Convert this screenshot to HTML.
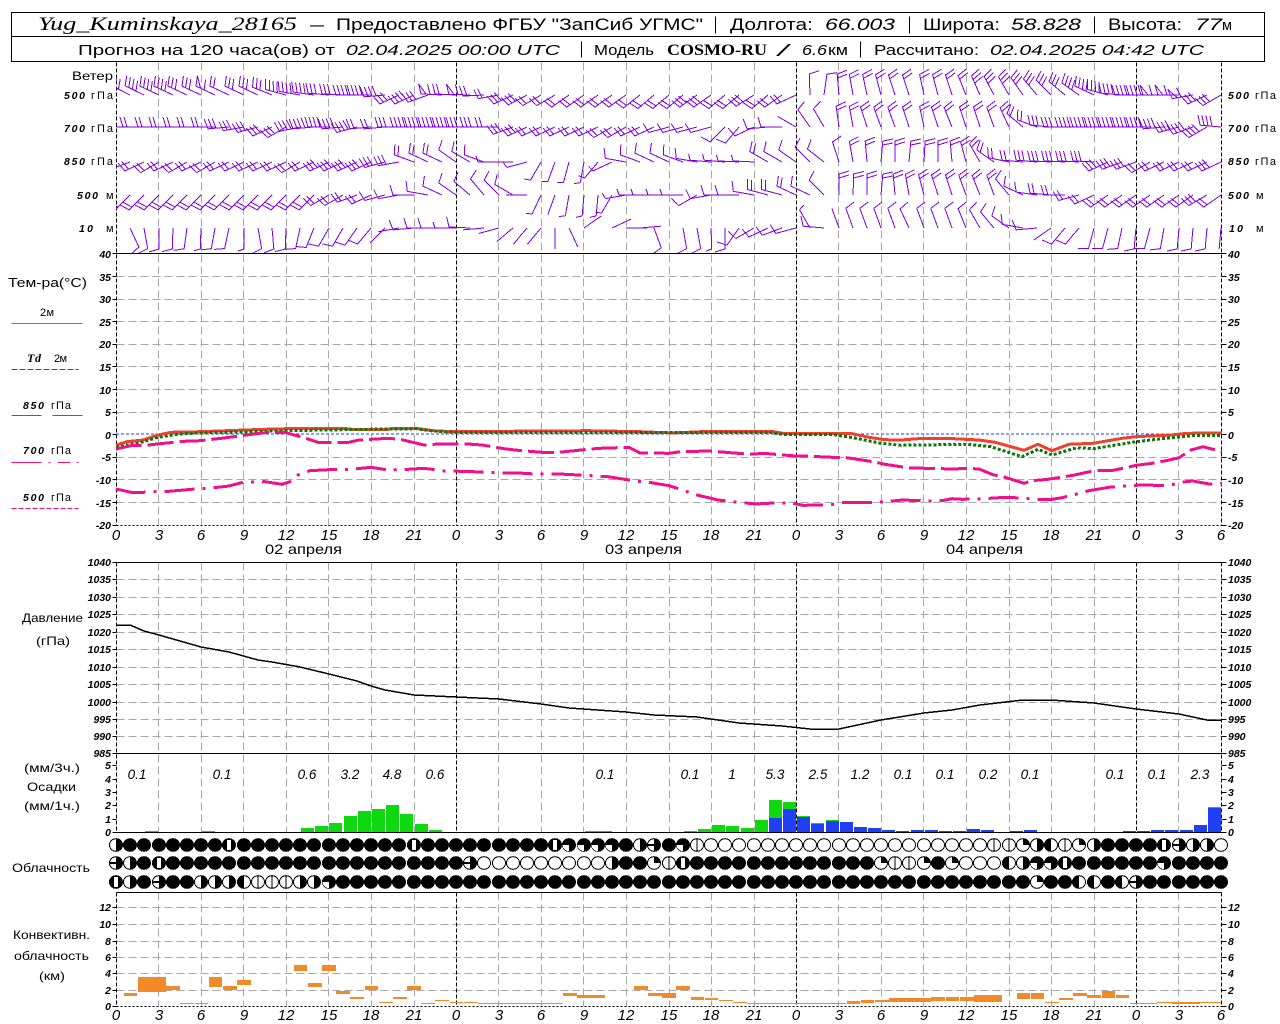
<!DOCTYPE html>
<html><head><meta charset="utf-8"><title>Meteogram</title>
<style>
html,body{margin:0;padding:0;background:#fff}
svg{display:block}
text{font-family:"Liberation Sans","DejaVu Sans",sans-serif;fill:#000;font-size:12px}
.i{font-style:italic}
.n{font-style:italic;font-size:10.5px;font-weight:bold}
.x{font-style:italic;font-size:15px}
.h1{font-size:16.5px}
.h2{font-size:15px}
.p{font-style:italic;font-size:13.5px}
</style></head><body>
<svg xmlns="http://www.w3.org/2000/svg" width="1280" height="1024" viewBox="0 0 1280 1024" shape-rendering="crispEdges">
<defs>
<clipPath id="wc"><rect x="116" y="62" width="1106" height="191"/></clipPath>
<g id="a"><path d="M0 0H-21"/></g>
<g id="s"><path d="M0 0H-21M-21 0l-2-6"/></g>
<g id="b"><path d="M0 0H-21l-3-10"/></g>
<g id="c"><path d="M0 0H-21l-3-10M-17 0l-3-10"/></g>
<g id="d"><path d="M0 0H-21l-3-10M-17 0l-3-10M-13 0l-3-10"/></g>
<g id="e"><path d="M0 0H-21l-3-10M-17 0l-3-10M-13 0l-3-10M-9 0l-3-10"/></g>
<g id="p"><path d="M0 0H-21l-3-10 8 10M-12 0l-3-10"/></g>
<path id="v" d="M0 62V525M0 562V832M0 892V1006"/>
<ellipse id="f" rx="7" ry="6.8" fill="#000"/>
<ellipse id="o" rx="6.5" ry="6.3" fill="#fff" stroke="#000"/>
<g id="r"><use href="#o"/><path d="M0-6.8A7 6.8 0 0 1 0 6.8Z" fill="#000"/></g>
<g id="l"><use href="#o"/><path d="M0-6.8A7 6.8 0 0 0 0 6.8Z" fill="#000"/></g>
<g id="w"><use href="#f"/><rect x="-2" y="-5" width="4" height="10" fill="#fff"/></g>
<g id="t"><use href="#o"/><path d="M0-6V6" stroke="#000"/></g>
<g id="m"><use href="#r"/><path d="M-7 0H0" stroke="#000" stroke-width="2"/></g>
<g id="u"><use href="#o"/><path d="M0 0V-6.8A7 6.8 0 0 1 7 0Z" fill="#000"/></g>
<g id="q"><use href="#f"/><path d="M0 0H-6.5A6.5 6 0 0 0 0 6Z" fill="#fff"/></g>
<g id="k"><use href="#o"/><path d="M0 0V-6.8A7 6.8 0 0 0 -7 0ZM0 0H-7A7 6.8 0 0 0 0 6.8Z" fill="#000"/></g>
</defs>
<rect width="1280" height="1024" fill="#fff"/>

<!-- grid -->
<g transform="translate(.5 .5)">
<g fill="none" stroke="#a8a8a8" stroke-dasharray="8 4">
<use href="#v" x="158"/><use href="#v" x="201"/><use href="#v" x="243"/><use href="#v" x="286"/><use href="#v" x="328"/><use href="#v" x="371"/><use href="#v" x="414"/><use href="#v" x="498"/><use href="#v" x="541"/><use href="#v" x="583"/><use href="#v" x="626"/><use href="#v" x="669"/><use href="#v" x="711"/><use href="#v" x="754"/><use href="#v" x="838"/><use href="#v" x="881"/><use href="#v" x="923"/><use href="#v" x="966"/><use href="#v" x="1009"/><use href="#v" x="1051"/><use href="#v" x="1094"/><use href="#v" x="1178"/>
<path d="M116 276H1221M116 299H1221M116 321H1221M116 344H1221M116 366H1221M116 389H1221M116 412H1221M116 457H1221M116 479H1221M116 502H1221"/>
<path d="M116 579H1221M116 597H1221M116 614H1221M116 632H1221M116 649H1221M116 667H1221M116 684H1221M116 702H1221M116 719H1221M116 736H1221"/>
<path d="M116 907H1221M116 924H1221M116 941H1221M116 957H1221M116 973H1221M116 990H1221"/>
</g>
<g fill="none" stroke="#000" stroke-dasharray="4 2">
<use href="#v" x="116"/><use href="#v" x="456"/><use href="#v" x="796"/><use href="#v" x="1136"/><use href="#v" x="1221"/>
</g>
<path fill="none" stroke="#000" d="M116 253H1221M116 562H1221M116 753H1221M116 832H1221M116 892H1221"/>
<path fill="none" stroke="#000" stroke-dasharray="2 2" d="M116 525H1221M116 1006H1221"/>
<path fill="none" stroke="#000" d="M112 253h4M112 276h4M112 299h4M112 321h4M112 344h4M112 366h4M112 389h4M112 412h4M112 434h4M112 457h4M112 479h4M112 502h4M112 525h4M1221 253h5M1221 276h5M1221 299h5M1221 321h5M1221 344h5M1221 366h5M1221 389h5M1221 412h5M1221 434h5M1221 457h5M1221 479h5M1221 502h5M1221 525h5M112 562h4M112 579h4M112 597h4M112 614h4M112 632h4M112 649h4M112 667h4M112 684h4M112 702h4M112 719h4M112 736h4M112 753h4M1221 562h5M1221 579h5M1221 597h5M1221 614h5M1221 632h5M1221 649h5M1221 667h5M1221 684h5M1221 702h5M1221 719h5M1221 736h5M1221 753h5M112 765h4M112 779h4M112 792h4M112 805h4M112 819h4M112 832h4M1221 765h5M1221 779h5M1221 792h5M1221 805h5M1221 819h5M1221 832h5M112 907h4M112 924h4M112 941h4M112 957h4M112 973h4M112 990h4M112 1006h4M1221 907h5M1221 924h5M1221 941h5M1221 957h5M1221 973h5M1221 990h5M1221 1006h5"/>
<!-- header -->
<rect x="11" y="12" width="1253" height="49" fill="none" stroke="#000"/>
<path d="M11 36H1264" stroke="#000"/>
<path d="M715 16V33M909 16V33M1094 16V33M581 41V57M860 41V57" stroke="#000" fill="none"/>
<path d="M11 323H82" stroke="#e05050"/>
<path d="M11 369H78" stroke="#0a780a" stroke-dasharray="6 2"/>
<path d="M11 415H41M52 415H82" stroke="#f0108c"/>
<path d="M11 462H41M48 462h2M57 462H70M76 462h2" stroke="#f0108c"/>
<path d="M11 508H78" stroke="#f0108c" stroke-dasharray="5 2"/>
</g>

<text x="38" y="30" class="i" style="font-family:'Liberation Serif',serif;font-size:19px" textLength="259" lengthAdjust="spacingAndGlyphs">Yug_Kuminskaya_28165</text>
<text x="310" y="30" class="h1" textLength="14" lengthAdjust="spacingAndGlyphs">—</text>
<text x="336" y="30" class="h1" textLength="367" lengthAdjust="spacingAndGlyphs">Предоставлено ФГБУ "ЗапСиб УГМС"</text>
<text x="730" y="30" class="h1" textLength="83" lengthAdjust="spacingAndGlyphs">Долгота:</text>
<text x="825" y="30" class="h1 i" textLength="70" lengthAdjust="spacingAndGlyphs">66.003</text>
<text x="923" y="30" class="h1" textLength="77" lengthAdjust="spacingAndGlyphs">Широта:</text>
<text x="1011" y="30" class="h1 i" textLength="70" lengthAdjust="spacingAndGlyphs">58.828</text>
<text x="1108" y="30" class="h1" textLength="74" lengthAdjust="spacingAndGlyphs">Высота:</text>
<text x="1195" y="30" class="h1 i" textLength="27" lengthAdjust="spacingAndGlyphs">77</text>
<text x="1222" y="30" class="h2" textLength="10" lengthAdjust="spacingAndGlyphs">м</text>
<text x="78" y="55" class="h2" textLength="257" lengthAdjust="spacingAndGlyphs">Прогноз на 120 часа(ов) от</text>
<text x="346" y="55" class="h2 i" textLength="214" lengthAdjust="spacingAndGlyphs">02.04.2025 00:00 UTC</text>
<text x="594" y="55" class="h2" textLength="60" lengthAdjust="spacingAndGlyphs">Модель</text>
<text x="667" y="55" style="font-family:'Liberation Serif',serif;font-size:16px;font-weight:bold" textLength="100" lengthAdjust="spacingAndGlyphs">COSMO-RU</text>
<text x="778" y="56" class="h1 i" textLength="10" lengthAdjust="spacingAndGlyphs">/</text>
<text x="802" y="55" class="h2 i" textLength="25" lengthAdjust="spacingAndGlyphs">6.6</text>
<text x="828" y="55" class="h2" textLength="20" lengthAdjust="spacingAndGlyphs">км</text>
<text x="874" y="55" class="h2" textLength="105" lengthAdjust="spacingAndGlyphs">Рассчитано:</text>
<text x="990" y="55" class="h2 i" textLength="214" lengthAdjust="spacingAndGlyphs">02.04.2025 04:42 UTC</text>

<!-- left labels -->
<text x="72" y="80" style="font-size:12px" textLength="41" lengthAdjust="spacingAndGlyphs">Ветер</text>
<text x="64" y="99" class="n" textLength="21">500</text><text x="91" y="99" style="font-size:11px" textLength="22">гПа</text>
<text x="64" y="132" class="n" textLength="21">700</text><text x="91" y="132" style="font-size:11px" textLength="22">гПа</text>
<text x="64" y="165" class="n" textLength="21">850</text><text x="91" y="165" style="font-size:11px" textLength="22">гПа</text>
<text x="77" y="199" class="n" textLength="21">500</text><text x="106" y="199" style="font-size:11px" textLength="7">м</text>
<text x="79" y="232" class="n" textLength="14">10</text><text x="106" y="232" style="font-size:11px" textLength="7">м</text>
<text x="1228" y="99" class="n" textLength="21">500</text><text x="1255" y="99" style="font-size:11px" textLength="21">гПа</text>
<text x="1228" y="132" class="n" textLength="21">700</text><text x="1255" y="132" style="font-size:11px" textLength="21">гПа</text>
<text x="1228" y="165" class="n" textLength="21">850</text><text x="1255" y="165" style="font-size:11px" textLength="21">гПа</text>
<text x="1228" y="199" class="n" textLength="21">500</text><text x="1256" y="199" style="font-size:11px" textLength="7">м</text>
<text x="1229" y="232" class="n" textLength="14">10</text><text x="1256" y="232" style="font-size:11px" textLength="7">м</text>
<text x="8" y="287" style="font-size:13px" textLength="79" lengthAdjust="spacingAndGlyphs">Тем-ра(°С)</text>
<text x="40" y="316" style="font-size:11px" textLength="14">2м</text>
<text x="27" y="362" style="font-family:'Liberation Serif',serif;font-weight:bold;font-style:italic;font-size:12px" textLength="14">Td</text>
<text x="54" y="362" style="font-size:11px" textLength="13">2м</text>
<text x="23" y="409" class="n" textLength="21">850</text><text x="51" y="409" style="font-size:11px" textLength="20">гПа</text>
<text x="23" y="454" class="n" textLength="21">700</text><text x="51" y="454" style="font-size:11px" textLength="20">гПа</text>
<text x="23" y="501" class="n" textLength="21">500</text><text x="51" y="501" style="font-size:11px" textLength="20">гПа</text>
<text x="22" y="622" textLength="61" lengthAdjust="spacingAndGlyphs">Давление</text>
<text x="36" y="645" textLength="34" lengthAdjust="spacingAndGlyphs">(гПа)</text>
<text x="24" y="772" textLength="56" lengthAdjust="spacingAndGlyphs">(мм/3ч.)</text>
<text x="27" y="791" textLength="49" lengthAdjust="spacingAndGlyphs">Осадки</text>
<text x="24" y="810" textLength="56" lengthAdjust="spacingAndGlyphs">(мм/1ч.)</text>
<text x="12" y="872" textLength="78" lengthAdjust="spacingAndGlyphs">Облачность</text>
<text x="13" y="939" textLength="77" lengthAdjust="spacingAndGlyphs">Конвективн.</text>
<text x="14" y="960" textLength="75" lengthAdjust="spacingAndGlyphs">облачность</text>
<text x="39" y="980" textLength="26" lengthAdjust="spacingAndGlyphs">(км)</text>

<!-- y axes -->
<g class="n" text-anchor="end">
<text class="n" x="111" y="258">40</text><text class="n" x="111" y="281">35</text><text class="n" x="111" y="303">30</text><text class="n" x="111" y="326">25</text><text class="n" x="111" y="348">20</text><text class="n" x="111" y="371">15</text><text class="n" x="111" y="394">10</text><text class="n" x="111" y="416">5</text><text class="n" x="111" y="439">0</text><text class="n" x="111" y="461">-5</text><text class="n" x="111" y="484">-10</text><text class="n" x="111" y="507">-15</text><text class="n" x="111" y="529">-20</text>
<text class="n" x="111" y="566">1040</text><text class="n" x="111" y="583">1035</text><text class="n" x="111" y="601">1030</text><text class="n" x="111" y="618">1025</text><text class="n" x="111" y="636">1020</text><text class="n" x="111" y="653">1015</text><text class="n" x="111" y="671">1010</text><text class="n" x="111" y="688">1005</text><text class="n" x="111" y="706">1000</text><text class="n" x="111" y="723">995</text><text class="n" x="111" y="740">990</text><text class="n" x="111" y="757">985</text>
<text class="n" x="111" y="769">5</text><text class="n" x="111" y="783">4</text><text class="n" x="111" y="796">3</text><text class="n" x="111" y="809">2</text><text class="n" x="111" y="823">1</text><text class="n" x="111" y="836">0</text>
<text class="n" x="111" y="911">12</text><text class="n" x="111" y="928">10</text><text class="n" x="111" y="945">8</text><text class="n" x="111" y="961">6</text><text class="n" x="111" y="977">4</text><text class="n" x="111" y="994">2</text><text class="n" x="111" y="1010">0</text>
</g>
<g>
<text class="n" x="1228" y="258">40</text><text class="n" x="1228" y="281">35</text><text class="n" x="1228" y="303">30</text><text class="n" x="1228" y="326">25</text><text class="n" x="1228" y="348">20</text><text class="n" x="1228" y="371">15</text><text class="n" x="1228" y="394">10</text><text class="n" x="1228" y="416">5</text><text class="n" x="1228" y="439">0</text><text class="n" x="1228" y="461">-5</text><text class="n" x="1228" y="484">-10</text><text class="n" x="1228" y="507">-15</text><text class="n" x="1228" y="529">-20</text>
<text class="n" x="1228" y="566">1040</text><text class="n" x="1228" y="583">1035</text><text class="n" x="1228" y="601">1030</text><text class="n" x="1228" y="618">1025</text><text class="n" x="1228" y="636">1020</text><text class="n" x="1228" y="653">1015</text><text class="n" x="1228" y="671">1010</text><text class="n" x="1228" y="688">1005</text><text class="n" x="1228" y="706">1000</text><text class="n" x="1228" y="723">995</text><text class="n" x="1228" y="740">990</text><text class="n" x="1228" y="757">985</text>
<text class="n" x="1228" y="769">5</text><text class="n" x="1228" y="783">4</text><text class="n" x="1228" y="796">3</text><text class="n" x="1228" y="809">2</text><text class="n" x="1228" y="823">1</text><text class="n" x="1228" y="836">0</text>
<text class="n" x="1228" y="911">12</text><text class="n" x="1228" y="928">10</text><text class="n" x="1228" y="945">8</text><text class="n" x="1228" y="961">6</text><text class="n" x="1228" y="977">4</text><text class="n" x="1228" y="994">2</text><text class="n" x="1228" y="1010">0</text>
</g>

<!-- x axes -->
<g text-anchor="middle">
<text class="x" x="116" y="540">0</text><text class="x" x="159" y="540">3</text><text class="x" x="201" y="540">6</text><text class="x" x="244" y="540">9</text><text class="x" x="286" y="540">12</text><text class="x" x="329" y="540">15</text><text class="x" x="371" y="540">18</text><text class="x" x="414" y="540">21</text><text class="x" x="456" y="540">0</text><text class="x" x="499" y="540">3</text><text class="x" x="541" y="540">6</text><text class="x" x="584" y="540">9</text><text class="x" x="626" y="540">12</text><text class="x" x="669" y="540">15</text><text class="x" x="711" y="540">18</text><text class="x" x="754" y="540">21</text><text class="x" x="796" y="540">0</text><text class="x" x="839" y="540">3</text><text class="x" x="881" y="540">6</text><text class="x" x="924" y="540">9</text><text class="x" x="966" y="540">12</text><text class="x" x="1009" y="540">15</text><text class="x" x="1051" y="540">18</text><text class="x" x="1094" y="540">21</text><text class="x" x="1136" y="540">0</text><text class="x" x="1179" y="540">3</text><text class="x" x="1221" y="540">6</text>
<text class="x" x="116" y="1020">0</text><text class="x" x="159" y="1020">3</text><text class="x" x="201" y="1020">6</text><text class="x" x="244" y="1020">9</text><text class="x" x="286" y="1020">12</text><text class="x" x="329" y="1020">15</text><text class="x" x="371" y="1020">18</text><text class="x" x="414" y="1020">21</text><text class="x" x="456" y="1020">0</text><text class="x" x="499" y="1020">3</text><text class="x" x="541" y="1020">6</text><text class="x" x="584" y="1020">9</text><text class="x" x="626" y="1020">12</text><text class="x" x="669" y="1020">15</text><text class="x" x="711" y="1020">18</text><text class="x" x="754" y="1020">21</text><text class="x" x="796" y="1020">0</text><text class="x" x="839" y="1020">3</text><text class="x" x="881" y="1020">6</text><text class="x" x="924" y="1020">9</text><text class="x" x="966" y="1020">12</text><text class="x" x="1009" y="1020">15</text><text class="x" x="1051" y="1020">18</text><text class="x" x="1094" y="1020">21</text><text class="x" x="1136" y="1020">0</text><text class="x" x="1179" y="1020">3</text><text class="x" x="1221" y="1020">6</text>
<text class="p" x="137" y="779">0.1</text><text class="p" x="222" y="779">0.1</text><text class="p" x="307" y="779">0.6</text><text class="p" x="350" y="779">3.2</text><text class="p" x="392" y="779">4.8</text><text class="p" x="435" y="779">0.6</text><text class="p" x="605" y="779">0.1</text><text class="p" x="690" y="779">0.1</text><text class="p" x="732" y="779">1</text><text class="p" x="775" y="779">5.3</text><text class="p" x="818" y="779">2.5</text><text class="p" x="860" y="779">1.2</text><text class="p" x="903" y="779">0.1</text><text class="p" x="945" y="779">0.1</text><text class="p" x="988" y="779">0.2</text><text class="p" x="1030" y="779">0.1</text><text class="p" x="1115" y="779">0.1</text><text class="p" x="1157" y="779">0.1</text><text class="p" x="1200" y="779">2.3</text>
</g>
<text x="265" y="554" style="font-size:14px" textLength="77" lengthAdjust="spacingAndGlyphs">02 апреля</text>
<text x="605" y="554" style="font-size:14px" textLength="77" lengthAdjust="spacingAndGlyphs">03 апреля</text>
<text x="946" y="554" style="font-size:14px" textLength="77" lengthAdjust="spacingAndGlyphs">04 апреля</text>

<!-- temperature -->
<path d="M116 434H1221" stroke="#2040ff" stroke-dasharray="3 2" fill="none"/>
<g fill="none" stroke-width="3" stroke-linejoin="round">
<polyline stroke="#f04030" points="116,445 127,441.7 143,440 158,435 171,432.3 200,431.7 245,430 265,429.3 286,428.7 347,428.7 355,429.7 388,429.3 394,428.3 416,428.3 433,430.7 453,431.7 588,430.7 640,431.7 673,433 709,431.3 771,431.3 783,433.3 852,433.7 869,437.3 885,439.7 901,440 918,438.7 946,438.3 979,440 995,442.3 1024,450.3 1038,444.3 1052,450.7 1069,444.3 1093,443.3 1122,438.3 1136,436.7 1171,435 1187,433.3 1222,433"/>
<polyline stroke="#0a780a" stroke-width="3" stroke-dasharray="3 2" points="116,447 139,443 158,437.3 180,434 200,433 241,432 286,430.7 367,429.3 416,428.7 433,431 453,432.3 640,432.7 771,432.7 783,434.3 832,434.3 856,438.3 881,443.3 901,445.3 966,444.3 991,446.7 1022,456.7 1038,449.3 1052,455 1077,447.7 1093,448.7 1136,441.7 1171,437.7 1191,435.7 1222,435.3"/>
<polyline stroke="#f0108c" stroke-dasharray="26 6" points="116,449 131,445.7 143,445.7 157,444 184,441.3 200,440.7 224,438 241,435.7 265,432.7 286,432.7 306,438.3 318,442.3 347,442.7 359,440 388,438.3 400,439.3 424,445 439,444 467,444 482,445 506,449 522,450.7 547,452.7 559,452.3 588,449.3 600,448.3 629,447.3 640,453 669,453.3 681,451.7 709,451 722,452 750,454.3 764,453.3 791,455.7 803,456 832,457.3 844,457.3 873,461.7 885,464.3 909,468 926,468.3 954,469 967,468.3 979,469 993,474.7 1005,477.3 1024,483.3 1032,480.7 1048,479.3 1073,475.3 1085,472.7 1095,470.7 1111,470.7 1126,467.7 1136,465.3 1152,463.3 1166,460.7 1179,457.7 1191,450 1203,446.7 1222,451.7"/>
<polyline stroke="#f0108c" stroke-dasharray="30 8 3 8" points="116,489 131,492.3 143,492.3 155,491.7 169,491.3 192,489.3 206,488.3 218,487.3 229,486 243,482.3 265,481.7 282,484.3 290,481.7 298,475 310,470.7 335,469.3 351,469.3 371,467.3 388,470 408,469.3 424,468.3 445,471 461,471.3 482,472 498,473 518,473 535,474 559,474 573,474.7 608,476.7 629,480 640,481.7 649,482.3 669,485.7 683,490 693,494 718,500 742,502.7 756,504 779,502.7 793,503.3 803,505.3 830,505 840,502.7 867,502.7 885,501.7 903,500 926,501 942,500.7 952,498.7 962,499.3 979,499 999,497.7 1015,497.7 1036,499.3 1052,499.3 1062,497.7 1073,495 1089,490.7 1099,489 1109,487.3 1126,486 1136,485.3 1148,485 1162,485.7 1172,484.7 1183,482 1193,481 1209,484 1222,483.3"/>
</g>
<!-- pressure -->
<polyline fill="none" stroke="#000" stroke-width="1.5" points="116,625 130,625 144,631 159,635 187,643 201,647 229,652 258,660 272,662 300,667 329,674 357,681 371,686 385,690 414,695 456,697 499,699 541,704 569,708 626,712 654,715 697,717 739,723 782,726 810,729 839,729 881,720 924,713 952,710 980,705 1023,700 1051,700 1094,703 1136,709 1179,714 1207,720 1221,720"/>

<!-- precipitation: green -->
<path fill="#10d810" d="M145 831h13v1h-13zM202 831h13v1h-13zM301 828h13v4h-13zM315 826h13v6h-13zM329 823h13v9h-13zM344 816h13v16h-13zM358 811h13v21h-13zM372 809h13v23h-13zM386 805h13v27h-13zM400 814h13v18h-13zM415 824h13v8h-13zM429 830h13v2h-13zM585 831h27v1h-27zM684 831h13v1h-13zM698 829h13v3h-13zM712 825h13v7h-13zM726 826h13v6h-13zM741 828h13v4h-13zM755 820h13v12h-13zM769 800h13v32h-13zM783 802h13v30h-13zM797 816h13v16h-13zM811 823h13v9h-13zM826 820h13v12h-13zM1208 807h13v25h-13z"/>
<path fill="#1f3ff5" d="M769 818h13v14h-13zM783 809h13v23h-13zM797 817h13v15h-13zM811 824h13v8h-13zM826 821h13v11h-13zM840 822h13v10h-13zM854 827h13v5h-13zM868 828h13v4h-13zM882 830h13v2h-13zM896 831h13v1h-13zM911 830h13v2h-13zM925 830h13v2h-13zM939 831h13v1h-13zM953 831h13v1h-13zM967 829h13v3h-13zM981 830h13v2h-13zM1010 831h13v1h-13zM1024 830h13v2h-13zM1123 831h13v1h-13zM1137 831h13v1h-13zM1151 830h13v2h-13zM1165 830h13v2h-13zM1180 830h13v2h-13zM1194 825h13v7h-13zM1208 808h13v24h-13z"/>

<!-- convective -->
<path fill="#f28a28" d="M124 993h13v3h-13zM138 977h28v15h-28zM166 986h14v4h-14zM180 1003h14v1h-14zM195 1003h13v1h-13zM209 977h13v10h-13zM223 986h14v4h-14zM237 980h14v5h-14zM294 965h13v6h-13zM308 983h14v4h-14zM322 965h14v6h-14zM336 991h14v3h-14zM350 997h14v2h-14zM365 986h13v4h-13zM379 1002h14v1h-14zM393 997h14v2h-14zM407 986h14v4h-14zM421 1003h14v1h-14zM435 1000h14v1h-14zM450 1002h13v1h-13zM464 1002h14v1h-14zM478 1003h85v1h-85zM563 993h14v3h-14zM577 995h28v3h-28zM634 986h14v4h-14zM648 993h14v3h-14zM662 993h14v5h-14zM676 986h14v4h-14zM691 997h13v3h-13zM705 998h13v2h-13zM719 1000h14v1h-14zM733 1002h14v1h-14zM747 1003h99v1h-99zM847 1001h13v3h-13zM861 1000h13v3h-13zM875 1000h14v2h-14zM889 998h42v4h-42zM931 997h14v4h-14zM946 997h13v4h-13zM960 997h14v4h-14zM974 995h28v7h-28zM1017 993h13v6h-13zM1031 993h13v6h-13zM1045 1002h14v1h-14zM1059 998h14v2h-14zM1073 993h14v3h-14zM1087 995h14v3h-14zM1102 991h13v7h-13zM1116 995h13v3h-13zM1130 1003h27v1h-27zM1157 1002h15v1h-15zM1172 1002h28v2h-28zM1200 1002h21v1h-21z"/>

<!-- clouds -->
<g transform="translate(0 845)">
<use href="#r" x="116"/><use href="#f" x="130"/><use href="#f" x="144"/><use href="#f" x="159"/><use href="#f" x="173"/><use href="#f" x="187"/><use href="#f" x="201"/><use href="#f" x="215"/><use href="#w" x="229"/><use href="#f" x="244"/><use href="#f" x="258"/><use href="#f" x="272"/><use href="#f" x="286"/><use href="#f" x="300"/><use href="#f" x="314"/><use href="#f" x="329"/><use href="#f" x="343"/><use href="#f" x="357"/><use href="#f" x="371"/><use href="#f" x="385"/><use href="#f" x="399"/><use href="#w" x="414"/><use href="#f" x="428"/><use href="#f" x="442"/><use href="#f" x="456"/><use href="#f" x="470"/><use href="#f" x="484"/><use href="#f" x="499"/><use href="#f" x="513"/><use href="#f" x="527"/><use href="#f" x="541"/><use href="#w" x="555"/><use href="#q" x="569"/><use href="#q" x="584"/><use href="#q" x="598"/><use href="#q" x="612"/><use href="#f" x="626"/><use href="#r" x="640"/><use href="#m" x="654"/><use href="#f" x="669"/><use href="#q" x="683"/><use href="#t" x="697"/><use href="#o" x="711"/><use href="#o" x="725"/><use href="#o" x="739"/><use href="#o" x="754"/><use href="#o" x="768"/><use href="#o" x="782"/><use href="#o" x="796"/><use href="#o" x="810"/><use href="#o" x="824"/><use href="#o" x="839"/><use href="#o" x="853"/><use href="#o" x="867"/><use href="#o" x="881"/><use href="#o" x="895"/><use href="#o" x="909"/><use href="#o" x="924"/><use href="#o" x="938"/><use href="#o" x="952"/><use href="#o" x="966"/><use href="#o" x="980"/><use href="#t" x="994"/><use href="#t" x="1009"/><use href="#u" x="1023"/><use href="#r" x="1037"/><use href="#l" x="1051"/><use href="#t" x="1065"/><use href="#u" x="1079"/><use href="#r" x="1094"/><use href="#f" x="1108"/><use href="#f" x="1122"/><use href="#f" x="1136"/><use href="#f" x="1150"/><use href="#w" x="1164"/><use href="#m" x="1179"/><use href="#r" x="1193"/><use href="#r" x="1207"/><use href="#o" x="1221"/>
</g>
<g transform="translate(0 863)">
<use href="#m" x="116"/><use href="#r" x="130"/><use href="#f" x="144"/><use href="#w" x="159"/><use href="#f" x="173"/><use href="#f" x="187"/><use href="#f" x="201"/><use href="#f" x="215"/><use href="#f" x="229"/><use href="#f" x="244"/><use href="#f" x="258"/><use href="#f" x="272"/><use href="#f" x="286"/><use href="#f" x="300"/><use href="#f" x="314"/><use href="#f" x="329"/><use href="#f" x="343"/><use href="#f" x="357"/><use href="#f" x="371"/><use href="#f" x="385"/><use href="#f" x="399"/><use href="#f" x="414"/><use href="#f" x="428"/><use href="#f" x="442"/><use href="#f" x="456"/><use href="#m" x="470"/><use href="#o" x="484"/><use href="#o" x="499"/><use href="#o" x="513"/><use href="#o" x="527"/><use href="#o" x="541"/><use href="#o" x="555"/><use href="#o" x="569"/><use href="#o" x="584"/><use href="#o" x="598"/><use href="#r" x="612"/><use href="#f" x="626"/><use href="#f" x="640"/><use href="#u" x="654"/><use href="#t" x="669"/><use href="#w" x="683"/><use href="#f" x="697"/><use href="#f" x="711"/><use href="#f" x="725"/><use href="#f" x="739"/><use href="#f" x="754"/><use href="#f" x="768"/><use href="#f" x="782"/><use href="#f" x="796"/><use href="#f" x="810"/><use href="#f" x="824"/><use href="#f" x="839"/><use href="#f" x="853"/><use href="#f" x="867"/><use href="#u" x="881"/><use href="#t" x="895"/><use href="#t" x="909"/><use href="#u" x="924"/><use href="#f" x="938"/><use href="#u" x="952"/><use href="#o" x="966"/><use href="#o" x="980"/><use href="#o" x="994"/><use href="#k" x="1009"/><use href="#r" x="1023"/><use href="#q" x="1037"/><use href="#q" x="1051"/><use href="#w" x="1065"/><use href="#f" x="1079"/><use href="#f" x="1094"/><use href="#f" x="1108"/><use href="#f" x="1122"/><use href="#f" x="1136"/><use href="#f" x="1150"/><use href="#q" x="1164"/><use href="#f" x="1179"/><use href="#f" x="1193"/><use href="#f" x="1207"/><use href="#f" x="1221"/>
</g>
<g transform="translate(0 882)">
<use href="#w" x="116"/><use href="#r" x="130"/><use href="#f" x="144"/><use href="#m" x="159"/><use href="#f" x="173"/><use href="#f" x="187"/><use href="#r" x="201"/><use href="#r" x="215"/><use href="#r" x="229"/><use href="#k" x="244"/><use href="#t" x="258"/><use href="#t" x="272"/><use href="#t" x="286"/><use href="#r" x="300"/><use href="#r" x="314"/><use href="#q" x="329"/><use href="#f" x="343"/><use href="#f" x="357"/><use href="#f" x="371"/><use href="#f" x="385"/><use href="#f" x="399"/><use href="#f" x="414"/><use href="#f" x="428"/><use href="#f" x="442"/><use href="#f" x="456"/><use href="#f" x="470"/><use href="#f" x="484"/><use href="#f" x="499"/><use href="#f" x="513"/><use href="#f" x="527"/><use href="#f" x="541"/><use href="#f" x="555"/><use href="#f" x="569"/><use href="#f" x="584"/><use href="#f" x="598"/><use href="#f" x="612"/><use href="#f" x="626"/><use href="#f" x="640"/><use href="#f" x="654"/><use href="#f" x="669"/><use href="#f" x="683"/><use href="#f" x="697"/><use href="#f" x="711"/><use href="#f" x="725"/><use href="#f" x="739"/><use href="#f" x="754"/><use href="#f" x="768"/><use href="#f" x="782"/><use href="#f" x="796"/><use href="#f" x="810"/><use href="#f" x="824"/><use href="#f" x="839"/><use href="#f" x="853"/><use href="#f" x="867"/><use href="#f" x="881"/><use href="#f" x="895"/><use href="#f" x="909"/><use href="#f" x="924"/><use href="#f" x="938"/><use href="#f" x="952"/><use href="#f" x="966"/><use href="#f" x="980"/><use href="#f" x="994"/><use href="#f" x="1009"/><use href="#u" x="1037"/><use href="#f" x="1023"/><use href="#f" x="1051"/><use href="#f" x="1065"/><use href="#k" x="1079"/><use href="#k" x="1094"/><use href="#f" x="1108"/><use href="#k" x="1122"/><use href="#m" x="1136"/><use href="#f" x="1150"/><use href="#f" x="1164"/><use href="#f" x="1179"/><use href="#f" x="1193"/><use href="#f" x="1207"/><use href="#f" x="1221"/>
</g>

<!-- wind -->
<g clip-path="url(#wc)" fill="none" stroke="#8000e0">
<g transform="translate(0 95)">
<use href="#d" transform="translate(130)rotate(27)"/><use href="#e" transform="translate(144)rotate(26)"/><use href="#e" transform="translate(159)rotate(25)"/><use href="#e" transform="translate(173)rotate(25)"/><use href="#d" transform="translate(187)rotate(25)"/><use href="#d" transform="translate(201)rotate(25)"/><use href="#p" transform="translate(215)rotate(25)"/><use href="#c" transform="translate(229)rotate(25)"/><use href="#d" transform="translate(244)rotate(25)"/><use href="#d" transform="translate(258)rotate(25)"/><use href="#d" transform="translate(272)rotate(22)"/><use href="#e" transform="translate(286)rotate(15)"/><use href="#e" transform="translate(300)rotate(10)"/><use href="#e" transform="translate(314)rotate(8)"/><use href="#d" transform="translate(329)rotate(5)"/><use href="#d" transform="translate(343)rotate(3)"/><use href="#e" transform="translate(357)rotate(0)"/><use href="#e" transform="translate(371)rotate(0)"/><use href="#e" transform="translate(385)rotate(-5)"/><use href="#d" transform="translate(399)rotate(-25)"/><use href="#e" transform="translate(414)rotate(-25)"/><use href="#d" transform="translate(428)rotate(-20)"/><use href="#p" transform="translate(442)rotate(3)"/><use href="#c" transform="translate(456)rotate(3)"/><use href="#p" transform="translate(470)rotate(2)"/><use href="#c" transform="translate(484)rotate(-3)"/><use href="#c" transform="translate(499)rotate(-10)"/><use href="#d" transform="translate(513)rotate(-25)"/><use href="#d" transform="translate(527)rotate(-28)"/><use href="#c" transform="translate(541)rotate(-30)"/><use href="#c" transform="translate(555)rotate(-30)"/><use href="#c" transform="translate(569)rotate(-35)"/><use href="#c" transform="translate(584)rotate(-35)"/><use href="#c" transform="translate(598)rotate(-35)"/><use href="#c" transform="translate(612)rotate(-35)"/><use href="#c" transform="translate(626)rotate(-35)"/><use href="#c" transform="translate(640)rotate(-38)"/><use href="#c" transform="translate(654)rotate(-40)"/><use href="#c" transform="translate(669)rotate(-40)"/><use href="#c" transform="translate(683)rotate(-40)"/><use href="#d" transform="translate(697)rotate(-35)"/><use href="#d" transform="translate(711)rotate(-35)"/><use href="#c" transform="translate(725)rotate(-40)"/><use href="#c" transform="translate(739)rotate(-40)"/><use href="#d" transform="translate(754)rotate(-32)"/><use href="#c" transform="translate(768)rotate(-40)"/><use href="#c" transform="translate(782)rotate(-35)"/><use href="#c" transform="translate(796)rotate(-25)"/><use href="#b" transform="translate(810)rotate(88)"/><use href="#b" transform="translate(824)rotate(98)"/><use href="#c" transform="translate(839)rotate(85)"/><use href="#c" transform="translate(853)rotate(80)"/><use href="#c" transform="translate(867)rotate(78)"/><use href="#c" transform="translate(881)rotate(75)"/><use href="#c" transform="translate(895)rotate(72)"/><use href="#c" transform="translate(909)rotate(72)"/><use href="#c" transform="translate(924)rotate(78)"/><use href="#c" transform="translate(938)rotate(75)"/><use href="#c" transform="translate(952)rotate(72)"/><use href="#c" transform="translate(966)rotate(68)"/><use href="#d" transform="translate(980)rotate(66)"/><use href="#d" transform="translate(994)rotate(62)"/><use href="#d" transform="translate(1009)rotate(60)"/><use href="#d" transform="translate(1023)rotate(55)"/><use href="#d" transform="translate(1037)rotate(50)"/><use href="#d" transform="translate(1051)rotate(45)"/><use href="#d" transform="translate(1065)rotate(40)"/><use href="#e" transform="translate(1079)rotate(35)"/><use href="#e" transform="translate(1094)rotate(25)"/><use href="#e" transform="translate(1108)rotate(15)"/><use href="#e" transform="translate(1122)rotate(5)"/><use href="#e" transform="translate(1136)rotate(0)"/><use href="#e" transform="translate(1150)rotate(0)"/><use href="#p" transform="translate(1164)rotate(0)"/><use href="#p" transform="translate(1179)rotate(0)"/><use href="#p" transform="translate(1193)rotate(-10)"/><use href="#d" transform="translate(1207)rotate(-25)"/><use href="#d" transform="translate(1221)rotate(-30)"/>
</g>
<g transform="translate(0 127)">
<use href="#c" transform="translate(130)"/><use href="#c" transform="translate(144)"/><use href="#c" transform="translate(159)"/><use href="#c" transform="translate(173)"/><use href="#c" transform="translate(187)"/><use href="#c" transform="translate(201)"/><use href="#c" transform="translate(215)"/><use href="#d" transform="translate(229)rotate(-5)"/><use href="#d" transform="translate(244)rotate(-10)"/><use href="#d" transform="translate(258)rotate(-15)"/><use href="#d" transform="translate(272)rotate(-25)"/><use href="#d" transform="translate(286)rotate(-30)"/><use href="#e" transform="translate(300)rotate(-12)"/><use href="#e" transform="translate(314)rotate(-5)"/><use href="#e" transform="translate(329)"/><use href="#e" transform="translate(343)rotate(-5)"/><use href="#e" transform="translate(357)rotate(-15)"/><use href="#c" transform="translate(371)rotate(-5)"/><use href="#c" transform="translate(385)rotate(-5)"/><use href="#d" transform="translate(399)"/><use href="#e" transform="translate(414)"/><use href="#e" transform="translate(428)"/><use href="#e" transform="translate(442)"/><use href="#e" transform="translate(456)"/><use href="#d" transform="translate(470)"/><use href="#d" transform="translate(484)"/><use href="#c" transform="translate(499)"/><use href="#d" transform="translate(513)rotate(-20)"/><use href="#d" transform="translate(527)rotate(-25)"/><use href="#c" transform="translate(541)rotate(-25)"/><use href="#c" transform="translate(555)rotate(-25)"/><use href="#c" transform="translate(569)rotate(-25)"/><use href="#c" transform="translate(584)rotate(-25)"/><use href="#c" transform="translate(598)rotate(-25)"/><use href="#c" transform="translate(612)rotate(-30)"/><use href="#c" transform="translate(626)rotate(-30)"/><use href="#c" transform="translate(640)rotate(-25)"/><use href="#c" transform="translate(654)rotate(-25)"/><use href="#b" transform="translate(669)rotate(-15)"/><use href="#b" transform="translate(683)rotate(-15)"/><use href="#b" transform="translate(697)rotate(-15)"/><use href="#b" transform="translate(711)rotate(-15)"/><use href="#b" transform="translate(725)rotate(-45)"/><use href="#b" transform="translate(739)rotate(-50)"/><use href="#b" transform="translate(754)rotate(-25)"/><use href="#b" transform="translate(768)rotate(-5)"/><use href="#b" transform="translate(782)"/><use href="#a" transform="translate(796)rotate(30)"/><use href="#b" transform="translate(810)rotate(55)"/><use href="#b" transform="translate(824)rotate(60)"/><use href="#c" transform="translate(839)rotate(82)"/><use href="#c" transform="translate(853)rotate(80)"/><use href="#c" transform="translate(867)rotate(72)"/><use href="#c" transform="translate(881)rotate(70)"/><use href="#c" transform="translate(895)rotate(70)"/><use href="#c" transform="translate(909)rotate(72)"/><use href="#c" transform="translate(924)rotate(78)"/><use href="#c" transform="translate(938)rotate(72)"/><use href="#c" transform="translate(952)rotate(68)"/><use href="#c" transform="translate(966)rotate(72)"/><use href="#c" transform="translate(980)rotate(72)"/><use href="#c" transform="translate(994)rotate(70)"/><use href="#c" transform="translate(1009)rotate(65)"/><use href="#c" transform="translate(1023)rotate(40)"/><use href="#c" transform="translate(1037)rotate(20)"/><use href="#d" transform="translate(1051)rotate(5)"/><use href="#d" transform="translate(1065)"/><use href="#e" transform="translate(1079)"/><use href="#e" transform="translate(1094)"/><use href="#e" transform="translate(1108)"/><use href="#e" transform="translate(1122)"/><use href="#e" transform="translate(1136)"/><use href="#e" transform="translate(1150)"/><use href="#e" transform="translate(1164)rotate(-5)"/><use href="#e" transform="translate(1179)rotate(-15)"/><use href="#e" transform="translate(1193)rotate(-20)"/><use href="#e" transform="translate(1207)rotate(-30)"/><use href="#e" transform="translate(1221)rotate(5)"/>
</g>
<g transform="translate(0 162)">
<use href="#c" transform="translate(130)rotate(-20)"/><use href="#c" transform="translate(144)rotate(-25)"/><use href="#c" transform="translate(159)rotate(-30)"/><use href="#c" transform="translate(173)rotate(-25)"/><use href="#c" transform="translate(187)rotate(-30)"/><use href="#c" transform="translate(201)rotate(-25)"/><use href="#c" transform="translate(215)rotate(-30)"/><use href="#c" transform="translate(229)rotate(-25)"/><use href="#c" transform="translate(244)rotate(-25)"/><use href="#c" transform="translate(258)rotate(-25)"/><use href="#c" transform="translate(272)rotate(-25)"/><use href="#c" transform="translate(286)rotate(-25)"/><use href="#c" transform="translate(300)rotate(-30)"/><use href="#c" transform="translate(314)rotate(-25)"/><use href="#d" transform="translate(329)rotate(-25)"/><use href="#d" transform="translate(343)rotate(-25)"/><use href="#d" transform="translate(357)rotate(-25)"/><use href="#d" transform="translate(371)rotate(-25)"/><use href="#d" transform="translate(385)rotate(-15)"/><use href="#d" transform="translate(399)rotate(-10)"/><use href="#c" transform="translate(414)rotate(20)"/><use href="#c" transform="translate(428)rotate(25)"/><use href="#c" transform="translate(442)rotate(25)"/><use href="#b" transform="translate(456)rotate(35)"/><use href="#b" transform="translate(470)rotate(30)"/><use href="#b" transform="translate(484)rotate(20)"/><use href="#s" transform="translate(499)"/><use href="#a" transform="translate(513)"/><use href="#s" transform="translate(527)rotate(-15)"/><use href="#s" transform="translate(541)rotate(-60)"/><use href="#s" transform="translate(555)rotate(-70)"/><use href="#s" transform="translate(569)rotate(-75)"/><use href="#s" transform="translate(584)rotate(-80)"/><use href="#s" transform="translate(598)rotate(-50)"/><use href="#s" transform="translate(612)rotate(-25)"/><use href="#b" transform="translate(626)rotate(10)"/><use href="#b" transform="translate(640)rotate(20)"/><use href="#b" transform="translate(654)rotate(25)"/><use href="#b" transform="translate(669)rotate(25)"/><use href="#b" transform="translate(683)rotate(20)"/><use href="#b" transform="translate(697)rotate(10)"/><use href="#s" transform="translate(711)rotate(5)"/><use href="#s" transform="translate(725)rotate(5)"/><use href="#s" transform="translate(739)rotate(3)"/><use href="#s" transform="translate(754)rotate(3)"/><use href="#c" transform="translate(768)rotate(30)"/><use href="#b" transform="translate(782)rotate(30)"/><use href="#b" transform="translate(796)rotate(35)"/><use href="#b" transform="translate(810)rotate(45)"/><use href="#b" transform="translate(824)rotate(38)"/><use href="#b" transform="translate(839)rotate(72)"/><use href="#c" transform="translate(853)rotate(80)"/><use href="#c" transform="translate(867)rotate(85)"/><use href="#c" transform="translate(881)rotate(95)"/><use href="#c" transform="translate(895)rotate(90)"/><use href="#c" transform="translate(909)rotate(95)"/><use href="#c" transform="translate(924)rotate(93)"/><use href="#c" transform="translate(938)rotate(90)"/><use href="#c" transform="translate(952)rotate(85)"/><use href="#c" transform="translate(966)rotate(75)"/><use href="#c" transform="translate(980)rotate(60)"/><use href="#c" transform="translate(994)rotate(35)"/><use href="#c" transform="translate(1009)rotate(12)"/><use href="#c" transform="translate(1023)rotate(5)"/><use href="#d" transform="translate(1037)rotate(5)"/><use href="#d" transform="translate(1051)rotate(3)"/><use href="#d" transform="translate(1065)rotate(3)"/><use href="#d" transform="translate(1079)rotate(3)"/><use href="#d" transform="translate(1094)rotate(3)"/><use href="#d" transform="translate(1108)rotate(-25)"/><use href="#d" transform="translate(1122)rotate(-20)"/><use href="#d" transform="translate(1136)rotate(-20)"/><use href="#c" transform="translate(1150)rotate(-30)"/><use href="#c" transform="translate(1164)rotate(-25)"/><use href="#c" transform="translate(1179)rotate(-25)"/><use href="#c" transform="translate(1193)rotate(-25)"/><use href="#c" transform="translate(1207)rotate(-25)"/><use href="#d" transform="translate(1221)rotate(-25)"/>
</g>
<g transform="translate(0 195)">
<use href="#c" transform="translate(130)rotate(-45)"/><use href="#c" transform="translate(144)rotate(-45)"/><use href="#c" transform="translate(159)rotate(-45)"/><use href="#c" transform="translate(173)rotate(-45)"/><use href="#c" transform="translate(187)rotate(-45)"/><use href="#c" transform="translate(201)rotate(-45)"/><use href="#c" transform="translate(215)rotate(-45)"/><use href="#c" transform="translate(229)rotate(-45)"/><use href="#c" transform="translate(244)rotate(-45)"/><use href="#c" transform="translate(258)rotate(-45)"/><use href="#c" transform="translate(272)rotate(-45)"/><use href="#c" transform="translate(286)rotate(-45)"/><use href="#c" transform="translate(300)rotate(-45)"/><use href="#c" transform="translate(314)rotate(-45)"/><use href="#c" transform="translate(329)rotate(-30)"/><use href="#c" transform="translate(343)rotate(-30)"/><use href="#c" transform="translate(357)rotate(-20)"/><use href="#c" transform="translate(371)rotate(-25)"/><use href="#b" transform="translate(385)rotate(-15)"/><use href="#b" transform="translate(399)rotate(-10)"/><use href="#b" transform="translate(414)"/><use href="#b" transform="translate(428)rotate(10)"/><use href="#b" transform="translate(442)rotate(25)"/><use href="#b" transform="translate(456)rotate(35)"/><use href="#b" transform="translate(470)rotate(40)"/><use href="#b" transform="translate(484)rotate(50)"/><use href="#b" transform="translate(499)rotate(45)"/><use href="#b" transform="translate(513)rotate(30)"/><use href="#a" transform="translate(527)"/><use href="#s" transform="translate(541)rotate(-65)"/><use href="#a" transform="translate(555)rotate(-70)"/><use href="#s" transform="translate(569)rotate(-80)"/><use href="#s" transform="translate(584)rotate(-85)"/><use href="#s" transform="translate(598)rotate(-85)"/><use href="#s" transform="translate(612)rotate(-60)"/><use href="#s" transform="translate(626)rotate(-10)"/><use href="#s" transform="translate(640)"/><use href="#s" transform="translate(654)"/><use href="#s" transform="translate(669)"/><use href="#s" transform="translate(683)"/><use href="#b" transform="translate(697)rotate(-30)"/><use href="#b" transform="translate(711)rotate(-10)"/><use href="#b" transform="translate(725)"/><use href="#b" transform="translate(739)"/><use href="#b" transform="translate(754)rotate(10)"/><use href="#c" transform="translate(768)rotate(15)"/><use href="#c" transform="translate(782)rotate(15)"/><use href="#c" transform="translate(796)rotate(25)"/><use href="#b" transform="translate(810)rotate(25)"/><use href="#b" transform="translate(824)rotate(45)"/><use href="#c" transform="translate(839)rotate(90)"/><use href="#c" transform="translate(853)rotate(92)"/><use href="#c" transform="translate(867)rotate(90)"/><use href="#c" transform="translate(881)rotate(95)"/><use href="#c" transform="translate(895)rotate(85)"/><use href="#c" transform="translate(909)rotate(80)"/><use href="#c" transform="translate(924)rotate(75)"/><use href="#c" transform="translate(938)rotate(72)"/><use href="#c" transform="translate(952)rotate(72)"/><use href="#c" transform="translate(966)rotate(70)"/><use href="#c" transform="translate(980)rotate(68)"/><use href="#c" transform="translate(994)rotate(70)"/><use href="#b" transform="translate(1009)rotate(50)"/><use href="#b" transform="translate(1023)rotate(25)"/><use href="#b" transform="translate(1037)rotate(8)"/><use href="#c" transform="translate(1051)rotate(5)"/><use href="#c" transform="translate(1065)"/><use href="#c" transform="translate(1079)rotate(-15)"/><use href="#c" transform="translate(1094)rotate(-25)"/><use href="#c" transform="translate(1108)rotate(-35)"/><use href="#c" transform="translate(1122)rotate(-35)"/><use href="#c" transform="translate(1136)rotate(-35)"/><use href="#c" transform="translate(1150)rotate(-35)"/><use href="#c" transform="translate(1164)rotate(-35)"/><use href="#c" transform="translate(1179)rotate(-35)"/><use href="#c" transform="translate(1193)rotate(-35)"/><use href="#d" transform="translate(1207)rotate(-30)"/><use href="#c" transform="translate(1221)rotate(-35)"/>
</g>
<g transform="translate(0 228)">
<use href="#b" transform="translate(130)rotate(-115)"/><use href="#b" transform="translate(144)rotate(-100)"/><use href="#b" transform="translate(159)rotate(-90)"/><use href="#b" transform="translate(173)rotate(-88)"/><use href="#b" transform="translate(187)rotate(-82)"/><use href="#s" transform="translate(201)rotate(-88)"/><use href="#b" transform="translate(215)rotate(-80)"/><use href="#b" transform="translate(229)rotate(-78)"/><use href="#s" transform="translate(244)rotate(-90)"/><use href="#b" transform="translate(258)rotate(-100)"/><use href="#b" transform="translate(272)rotate(-95)"/><use href="#b" transform="translate(286)rotate(-88)"/><use href="#b" transform="translate(300)rotate(-78)"/><use href="#b" transform="translate(314)rotate(-68)"/><use href="#b" transform="translate(329)rotate(-60)"/><use href="#b" transform="translate(343)rotate(-60)"/><use href="#b" transform="translate(357)rotate(-55)"/><use href="#b" transform="translate(371)rotate(-50)"/><use href="#a" transform="translate(385)rotate(-45)"/><use href="#a" transform="translate(399)rotate(-10)"/><use href="#b" transform="translate(414)rotate(-5)"/><use href="#b" transform="translate(428)"/><use href="#b" transform="translate(442)"/><use href="#s" transform="translate(456)"/><use href="#b" transform="translate(470)rotate(3)"/><use href="#a" transform="translate(484)rotate(-5)"/><use href="#a" transform="translate(499)rotate(-15)"/><use href="#a" transform="translate(513)rotate(-40)"/><use href="#a" transform="translate(527)rotate(-50)"/><use href="#a" transform="translate(541)rotate(-50)"/><use href="#a" transform="translate(555)rotate(-90)"/><use href="#a" transform="translate(569)rotate(-115)"/><use href="#a" transform="translate(584)rotate(145)"/><use href="#a" transform="translate(612)rotate(155)"/><use href="#a" transform="translate(626)rotate(180)"/><use href="#a" transform="translate(640)rotate(175)"/><use href="#b" transform="translate(654)rotate(-110)"/><use href="#b" transform="translate(683)rotate(-100)"/><use href="#b" transform="translate(697)rotate(-100)"/><use href="#s" transform="translate(711)rotate(-92)"/><use href="#b" transform="translate(725)rotate(-90)"/><use href="#b" transform="translate(739)rotate(-55)"/><use href="#b" transform="translate(754)rotate(-30)"/><use href="#b" transform="translate(768)rotate(-25)"/><use href="#b" transform="translate(782)rotate(-20)"/><use href="#b" transform="translate(796)rotate(-15)"/><use href="#s" transform="translate(810)rotate(60)"/><use href="#b" transform="translate(824)rotate(5)"/><use href="#a" transform="translate(839)rotate(70)"/><use href="#b" transform="translate(853)rotate(70)"/><use href="#b" transform="translate(867)rotate(70)"/><use href="#b" transform="translate(881)rotate(70)"/><use href="#b" transform="translate(895)rotate(70)"/><use href="#b" transform="translate(909)rotate(65)"/><use href="#b" transform="translate(924)rotate(70)"/><use href="#b" transform="translate(938)rotate(70)"/><use href="#b" transform="translate(952)rotate(70)"/><use href="#b" transform="translate(966)rotate(68)"/><use href="#b" transform="translate(980)rotate(60)"/><use href="#b" transform="translate(994)rotate(50)"/><use href="#b" transform="translate(1009)rotate(35)"/><use href="#b" transform="translate(1023)rotate(10)"/><use href="#b" transform="translate(1037)rotate(-5)"/><use href="#a" transform="translate(1051)rotate(-35)"/><use href="#b" transform="translate(1065)rotate(-50)"/><use href="#b" transform="translate(1079)rotate(-50)"/><use href="#b" transform="translate(1094)rotate(-75)"/><use href="#b" transform="translate(1108)rotate(-75)"/><use href="#b" transform="translate(1122)rotate(-78)"/><use href="#b" transform="translate(1136)rotate(-85)"/><use href="#b" transform="translate(1150)rotate(-75)"/><use href="#b" transform="translate(1164)rotate(-80)"/><use href="#b" transform="translate(1179)rotate(-85)"/><use href="#b" transform="translate(1193)rotate(-85)"/><use href="#b" transform="translate(1207)rotate(-85)"/><use href="#a" transform="translate(1221)rotate(-85)"/>
</g>
</g>
</svg>
</body></html>
